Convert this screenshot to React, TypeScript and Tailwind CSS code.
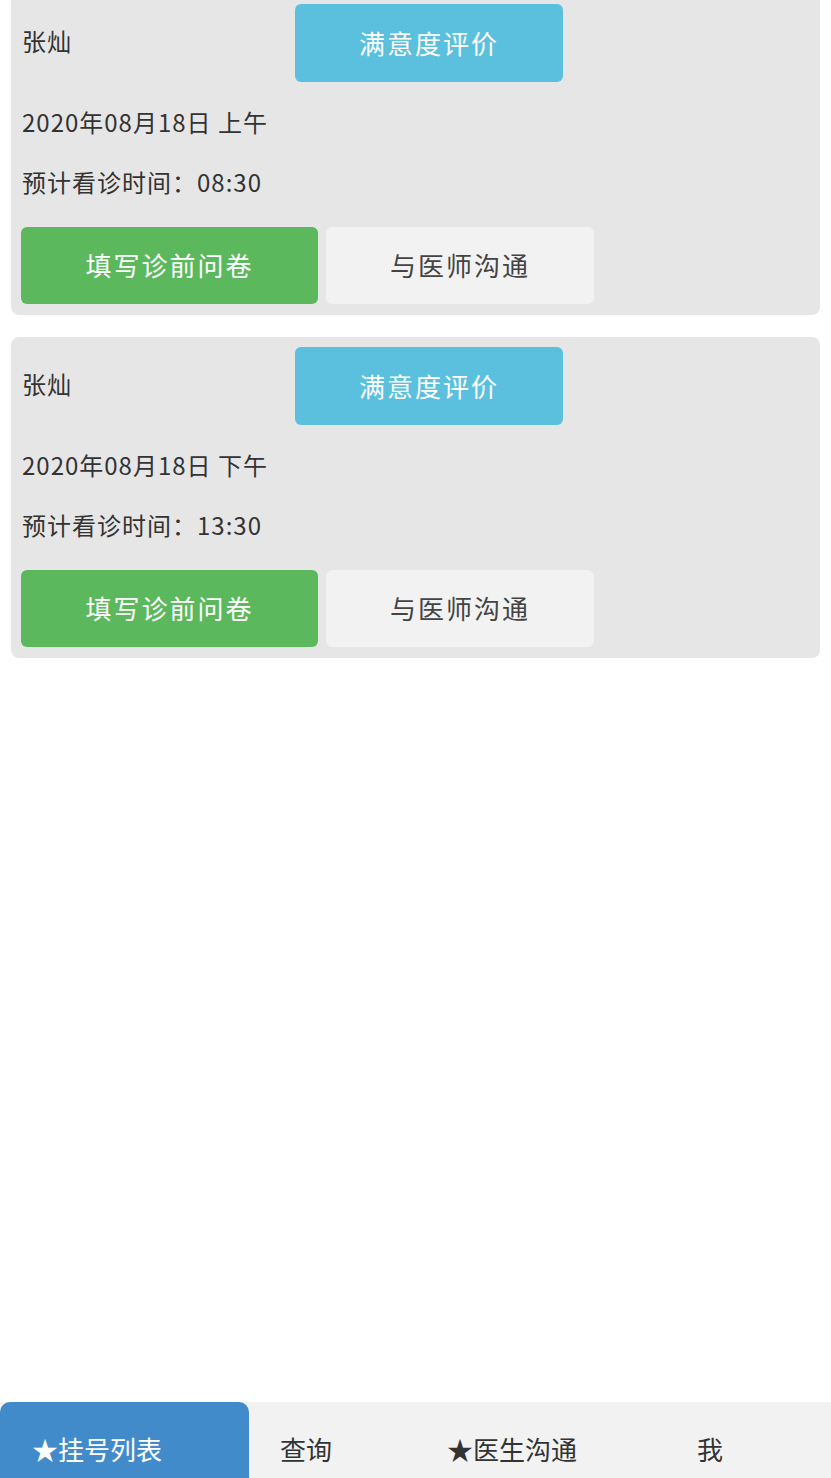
import React from "react";

const font = { fontFamily: '"Noto Sans CJK SC", "Noto Sans", sans-serif' };

function Card({ date, time }: { date: string; time: string }) {
  return (
    <div className="mx-[11px] rounded-[8px] bg-[#e6e6e6] px-[10px] pt-[10px] pb-[11px] text-[#333333]">
      <div className="flex h-[78px] items-center">
        <div className="w-[274px] pl-[1px] pb-[4px] text-[24px] tracking-[1px]">张灿</div>
        <div className="flex h-[78px] w-[268px] items-center justify-center rounded-[6px] bg-[#5bc0de] pb-[2px] text-[26px] tracking-[2px] text-white">
          满意度评价
        </div>
      </div>
      <div className="mt-[12px] flex h-[60px] items-center pl-[1px] pb-[4px] text-[24px] tracking-[1px]">{date}</div>
      <div className="flex h-[60px] items-center pl-[1px] pb-[4px] text-[24px] tracking-[1px]">{time}</div>
      <div className="mt-[13px] flex h-[77px] gap-[8px]">
        <div className="flex w-[297px] items-center justify-center rounded-[6px] bg-[#5cb85c] pb-[2px] text-[26px] tracking-[2px] text-white">
          填写诊前问卷
        </div>
        <div className="flex w-[268px] items-center justify-center rounded-[6px] bg-[#f2f2f2] pb-[2px] text-[26px] tracking-[2px] text-[#444444]">
          与医师沟通
        </div>
      </div>
    </div>
  );
}

export default function App() {
  return (
    <div className="flex h-[1478px] flex-col overflow-hidden bg-white" style={font}>
      <div className="mt-[-6px] flex flex-col gap-[22px]">
        <Card date="2020年08月18日 上午" time="预计看诊时间：08:30" />
        <Card date="2020年08月18日 下午" time="预计看诊时间：13:30" />
      </div>
      <div className="mt-auto flex h-[76px] bg-[#f2f2f2] text-[26px] text-[#333333]">
        <div className="flex w-[249px] items-center rounded-t-[10px] bg-[#428bca] pt-[16px] pl-[32px] text-white">
          ★挂号列表
        </div>
        <div className="flex w-[167px] items-center pt-[16px] pl-[31px]">查询</div>
        <div className="flex w-[250px] items-center pt-[16px] pl-[31px]">★医生沟通</div>
        <div className="flex flex-1 items-center pt-[16px] pl-[31px]">我</div>
      </div>
    </div>
  );
}
